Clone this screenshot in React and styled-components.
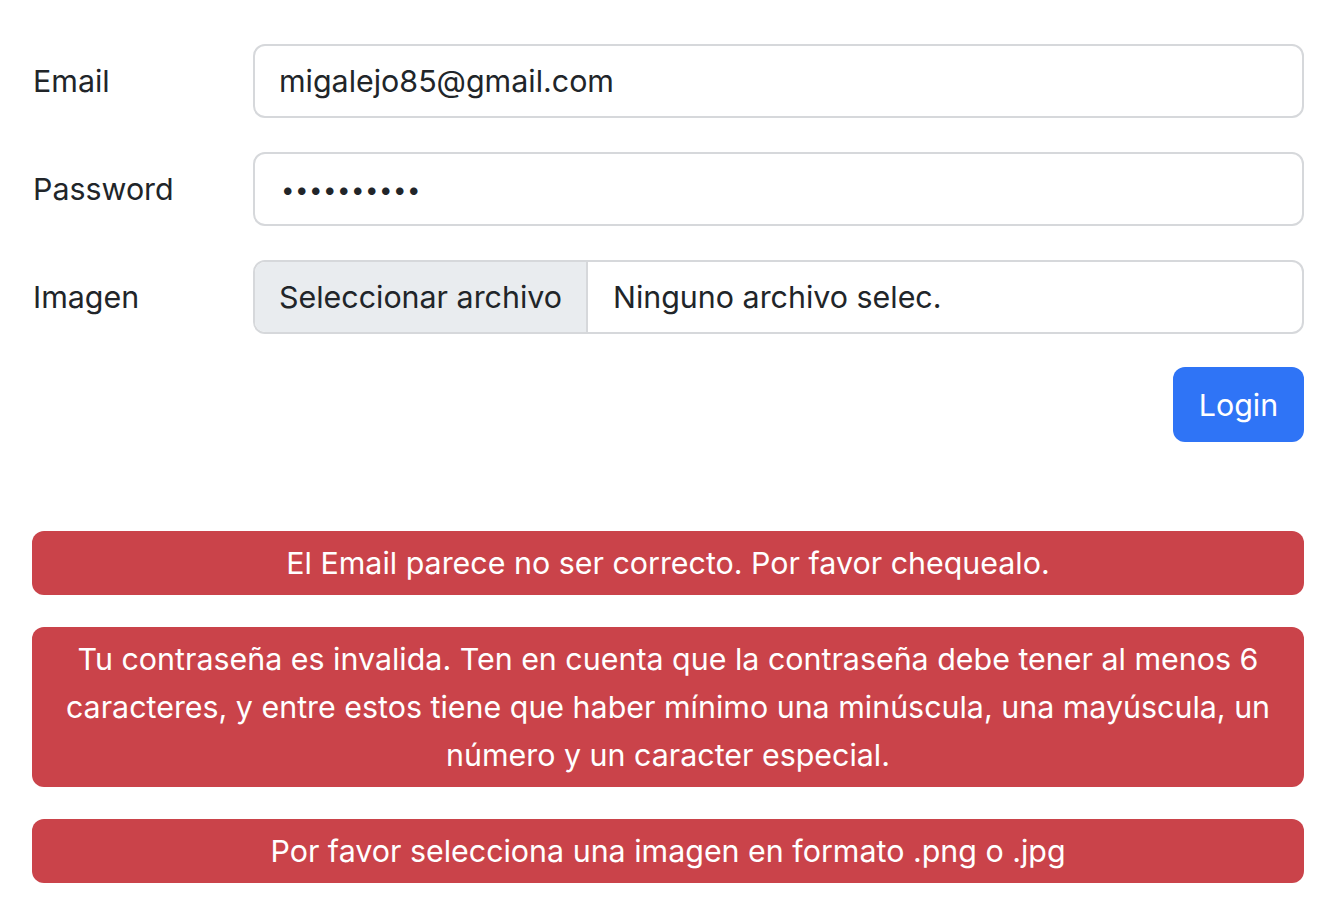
import React from "react";
import styled, { createGlobalStyle } from "styled-components";

const GlobalStyle = createGlobalStyle`
  body {
    margin: 0;
    background: #fff;
    font-family: Inter, "Liberation Sans", sans-serif;
    color: #212529;
  }
`;

const Page = styled.div`
  padding: 44px 38px 0 32px;
`;

const Form = styled.form`
  display: flex;
  flex-direction: column;
  gap: 34px;
`;

const Row = styled.div`
  display: flex;
  align-items: center;
`;

const Label = styled.label`
  width: 221px;
  font-size: 30.4px;
  line-height: 48px;
  padding-left: 1px;
  box-sizing: border-box;
  flex-shrink: 0;
`;

const Field = styled.div`
  flex: 1;
  height: 74px;
  box-sizing: border-box;
  border: 2px solid #d6d8db;
  border-radius: 12px;
  display: flex;
  align-items: center;
  overflow: hidden;
  font-size: 30.4px;
  color: #212529;
`;

const Value = styled.span`
  padding-left: ${p => p.pad || 24}px;
`;

const Dots = styled.span`
  padding-left: 26px;
  font-size: 24px;
  letter-spacing: 0.5px;
`;

const FileButton = styled.span`
  height: 100%;
  display: flex;
  align-items: center;
  padding: 0 24px;
  background: #e9ecef;
  border-right: 2px solid #d6d8db;
`;

const Actions = styled.div`
  display: flex;
  justify-content: flex-end;
  margin-top: 33px;
`;

const Button = styled.button`
  width: 131px;
  height: 75px;
  border: none;
  border-radius: 12px;
  background: #2f74f6;
  color: #fff;
  font-family: inherit;
  font-size: 30.4px;
`;

const Alerts = styled.div`
  margin-top: 89px;
  display: flex;
  flex-direction: column;
  gap: 32px;
`;

const Alert = styled.div`
  background: #ca434a;
  color: #fff;
  border-radius: 12px;
  padding: 8px 24px;
  text-align: center;
  font-size: 30.4px;
  line-height: 48px;
`;

export default function App() {
  return (
    <>
      <GlobalStyle />
      <Page>
        <Form>
          <Row>
            <Label>Email</Label>
            <Field>
              <Value>migalejo85@gmail.com</Value>
            </Field>
          </Row>
          <Row>
            <Label>Password</Label>
            <Field>
              <Dots>••••••••••</Dots>
            </Field>
          </Row>
          <Row>
            <Label>Imagen</Label>
            <Field>
              <FileButton>Seleccionar archivo</FileButton>
              <Value pad={25}>Ninguno archivo selec.</Value>
            </Field>
          </Row>
        </Form>
        <Actions>
          <Button type="button">Login</Button>
        </Actions>
        <Alerts>
          <Alert>El Email parece no ser correcto. Por favor chequealo.</Alert>
          <Alert>
            Tu contraseña es invalida. Ten en cuenta que la contraseña debe
            tener al menos 6 caracteres, y entre estos tiene que haber mínimo
            una minúscula, una mayúscula, un número y un caracter especial.
          </Alert>
          <Alert>Por favor selecciona una imagen en formato .png o .jpg</Alert>
        </Alerts>
      </Page>
    </>
  );
}
